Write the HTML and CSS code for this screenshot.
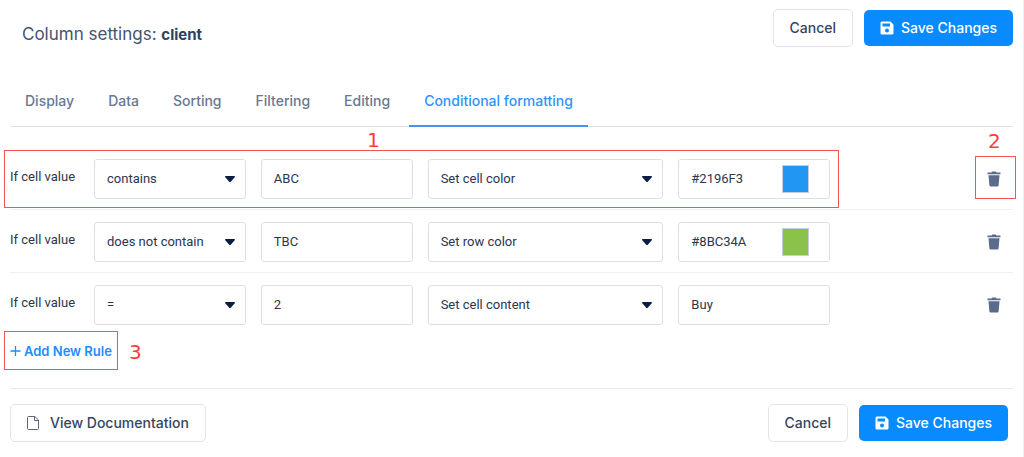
FILE: index.html
```html
<!DOCTYPE html>
<html lang="en">
<head>
<meta charset="utf-8">
<title>Column settings</title>
<link rel="stylesheet" href="styles.css">
</head>
<body>
<svg class="sprite" aria-hidden="true">
  <symbol id="save" viewBox="0 0 14 14"><path fill-rule="evenodd" d="M1.500 .5h9L13.500 3.500v8.500a1.500 1.500 0 0 1-1.500 1.500H2A1.500 1.500 0 0 1 .5 12V2A1.500 1.500 0 0 1 2 .5zM2.500 2.500v3h7.500v-3zM7 7.500a2 2 0 1 0 0 4 2 2 0 0 0 0-4z"/></symbol>
  <symbol id="trash" viewBox="0 0 14 16"><path d="M.5 1.500h4L5.200.5h3.600l.7 1h4v1.700H.5zM1.500 4.200h11l-.9 10.300a1.200 1.200 0 0 1-1.200 1H3.600a1.200 1.200 0 0 1-1.200-1z"/></symbol>
  <symbol id="file" viewBox="0 0 12 14"><path fill="none" stroke="currentColor" d="M1.500.5h6.300L11.500 4v8.500a1 1 0 0 1-1 1h-9a1 1 0 0 1-1-1v-11a1 1 0 0 1 1-1zM7.500.5v4h4"/></symbol>
  <symbol id="plus" viewBox="0 0 12 12"><path fill="none" stroke="currentColor" stroke-width="1.400" d="M6 .5v11M.5 6h11"/></symbol>
</svg>
<main class="panel">
  <header class="bar header">
    <h1 class="title">Column settings: <strong>client</strong></h1>
    <div class="actions">
      <button class="btn" type="button">Cancel</button>
      <button class="btn primary" type="button"><svg class="icon-save"><use href="#save"/></svg>Save Changes</button>
    </div>
  </header>

  <nav class="tabs">
    <a class="tab" href="#">Display</a>
    <a class="tab" href="#">Data</a>
    <a class="tab" href="#">Sorting</a>
    <a class="tab" href="#">Filtering</a>
    <a class="tab" href="#">Editing</a>
    <a class="tab active" href="#" aria-current="page">Conditional formatting</a>
  </nav>

  <section class="rules">
    <div class="rule">
      <label class="label" for="op1">If cell value</label>
      <select class="field" id="op1"><option>contains</option></select>
      <input class="field" type="text" value="ABC" aria-label="Value">
      <select class="field" aria-label="Action"><option>Set cell color</option></select>
      <div class="field color"><input class="hex" type="text" value="#2196F3" aria-label="Color"><button class="swatch blue" type="button" aria-label="Pick color"></button></div>
      <button class="delete" type="button" aria-label="Delete rule"><svg class="icon-trash"><use href="#trash"/></svg><span class="mark mark-delete"><span class="num">2</span></span></button>
      <span class="mark mark-rule"><span class="num">1</span></span>
    </div>
    <div class="rule">
      <label class="label" for="op2">If cell value</label>
      <select class="field" id="op2"><option>does not contain</option></select>
      <input class="field" type="text" value="TBC" aria-label="Value">
      <select class="field" aria-label="Action"><option>Set row color</option></select>
      <div class="field color"><input class="hex" type="text" value="#8BC34A" aria-label="Color"><button class="swatch green" type="button" aria-label="Pick color"></button></div>
      <button class="delete" type="button" aria-label="Delete rule"><svg class="icon-trash"><use href="#trash"/></svg></button>
    </div>
    <div class="rule">
      <label class="label" for="op3">If cell value</label>
      <select class="field" id="op3"><option>=</option></select>
      <input class="field" type="text" value="2" aria-label="Value">
      <select class="field" aria-label="Action"><option>Set cell content</option></select>
      <input class="field" type="text" value="Buy" aria-label="Content">
      <button class="delete" type="button" aria-label="Delete rule"><svg class="icon-trash"><use href="#trash"/></svg></button>
    </div>
  </section>

  <button class="add" type="button"><svg class="icon-plus"><use href="#plus"/></svg>Add New Rule<span class="mark mark-add"><span class="num">3</span></span></button>

  <footer class="bar footer">
    <button class="btn docs" type="button"><svg class="icon-file"><use href="#file"/></svg>View Documentation</button>
    <div class="actions">
      <button class="btn" type="button">Cancel</button>
      <button class="btn primary" type="button"><svg class="icon-save"><use href="#save"/></svg>Save Changes</button>
    </div>
  </footer>
</main>
</body>
</html>
```
FILE: styles.css
```css
* { box-sizing: border-box; }
body { margin: 0; background: #fff; font-family: Roboto, "Liberation Sans", sans-serif; font-size: 13px; color: #2c3550; }
button, input, select { font: inherit; color: inherit; margin: 0; }
button { cursor: pointer; }
.sprite { display: none; }
.panel { min-height: 100vh; padding: 9px 10px 14px; border-right: 1px solid #eef0f3; }
.bar { display: flex; align-items: center; justify-content: space-between; }
.title { margin: 12px 0 0 12px; font: 400 17px/24px Inter, sans-serif; color: #44546f; }
.title strong { font-size: 15px; font-weight: 700; color: #2d4263; }
.actions { display: flex; align-items: center; gap: 11px; }
.btn { display: flex; align-items: center; height: 38px; padding: 0 16px; border: 1px solid #e1e5ea; border-radius: 5px; background: #fff; font: 500 14px/20px Inter, sans-serif; color: #344563; }
.primary { height: 36px; border: 0; background: #0a8aff; color: #fff; }
.icon-save { width: 14px; height: 14px; margin-right: 7px; fill: currentColor; }
.icon-file { width: 12px; height: 14px; margin-right: 11px; color: #5b6478; }

.tabs { display: flex; gap: 4px; margin-top: 29px; border-bottom: 1px solid #dfe1e6; }
.tab { padding: 15px 15px 14px; margin-bottom: -1px; border-bottom: 2px solid transparent; font: 500 14px/20px Inter, sans-serif; color: #6b7793; text-decoration: none; }
.active { color: #2f92ff; border-color: #4a90f0; }

.rules { padding-top: 20px; }
.rule { position: relative; display: grid; grid-template-columns: 69px 152fr 152fr 236fr 152fr 168fr; gap: 15px; align-items: center; padding: 12px 0 10px; border-bottom: 1px solid #eef0f4; }
.rule:last-child { border-bottom: 0; }
.label { padding-bottom: 5px; white-space: nowrap; }
.field { width: 100%; min-width: 0; height: 40px; padding: 0 12px 2px; border: 1px solid #dcdfe6; border-radius: 3px; background: #fff; outline: 0; }
select.field { appearance: none; padding-right: 28px; background: #fff url("data:image/svg+xml,%3Csvg xmlns='http://www.w3.org/2000/svg' viewBox='0 0 10 6'%3E%3Cpath fill='%23091e42' d='M.5 0h9q.8.7 0 1.500L6 5.500q-1 1-2 0L.5 1.500q-.8-.8 0-1.500z'/%3E%3C/svg%3E") no-repeat right 10px center / 10px 6px; }
.color { display: flex; align-items: center; justify-content: space-between; padding: 0 20px 0 12px; }
.hex { width: 70px; min-width: 0; padding: 0 0 2px; border: 0; outline: 0; }
.swatch { flex: none; width: 27px; height: 28px; padding: 0; border: 1px solid #c3cede; }
.blue { background: #2196f3; }
.green { background: #8bc34a; }
.delete { position: relative; justify-self: end; margin-right: 12px; padding: 0; border: 0; background: none; }
.icon-trash { display: block; width: 14px; height: 16px; fill: #5a6b8c; }

.add { position: relative; display: flex; align-items: center; gap: 3px; margin-top: 6px; padding: 0; border: 0; background: none; font: 600 13px/20px Inter, sans-serif; color: #1e8cff; }
.icon-plus { width: 11px; height: 12px; }

.mark { position: absolute; border: 1px solid #f05555; pointer-events: none; }
.num { position: absolute; font: 400 20px/20px "DejaVu Sans", sans-serif; color: #f83e3e; }
.mark-rule { inset: 3px 174px 1px -6px; }
.mark-rule .num { left: 362px; top: -21px; }
.mark-delete { inset: -15px -15px -12px -12px; }
.mark-delete .num { left: 12px; top: -26px; }
.mark-add { inset: -10px -6px -9px -6px; }
.mark-add .num { right: -25px; top: 10px; }

.footer { margin-top: 27px; padding-top: 15px; border-top: 1px solid #e5e8ec; }
.footer .actions { margin-right: 5px; }
```
